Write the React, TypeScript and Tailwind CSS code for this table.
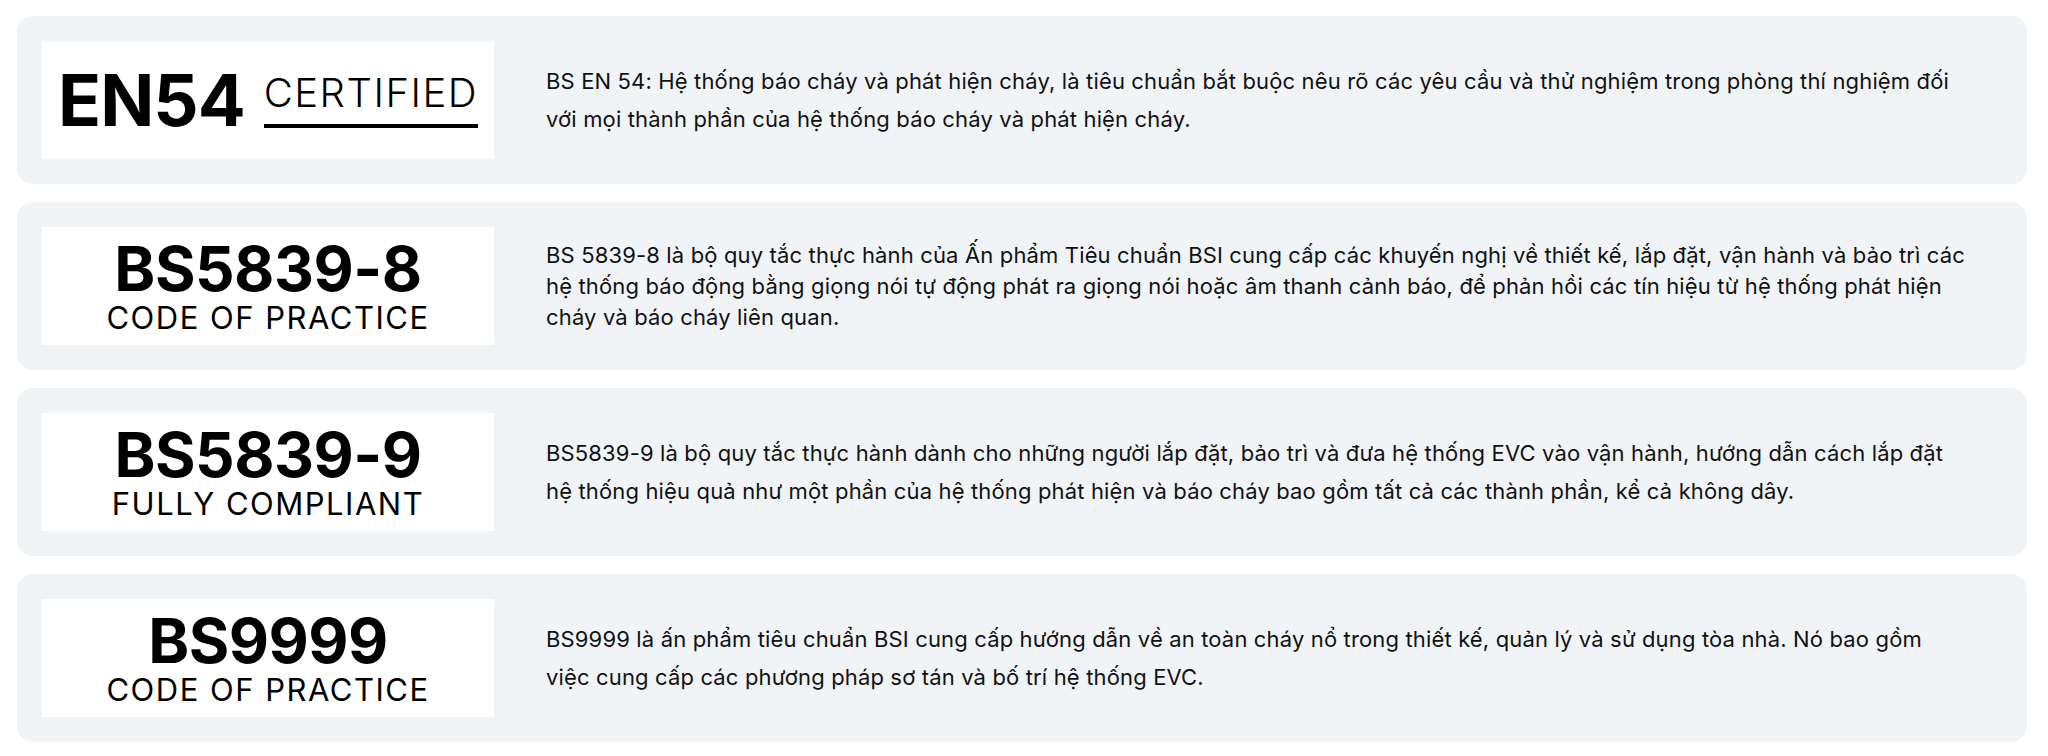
import React from "react";

type Standard = {
    id: string;
    badge: React.ReactNode;
    lines: string[];
    tight?: boolean;
};

const EN54Badge = () => (
    <div className="flex items-center gap-[19px]">
        <span className="text-[71px] font-bold leading-none tracking-[-1px]">EN54</span>
        <span className="flex flex-col items-stretch">
            <span className="text-[40px] font-light leading-none tracking-[1.5px]">CERTIFIED</span>
            <span className="mt-[11px] h-[4px] bg-black" />
        </span>
    </div>
);

const CodeBadge = ({ title, subtitle }: { title: string; subtitle: string }) => (
    <div className="flex flex-col items-center">
        <span className="text-[62px] font-bold leading-[62px] tracking-[-0.5px]">{title}</span>
        <span className="mt-[2px] text-[31px] font-normal leading-[32px] tracking-[1.5px]">{subtitle}</span>
    </div>
);

const standards: Standard[] = [
    {
        id: "en54",
        badge: <EN54Badge />,
        lines: [
            "BS EN 54: Hệ thống báo cháy và phát hiện cháy, là tiêu chuẩn bắt buộc nêu rõ các yêu cầu và thử nghiệm trong phòng thí nghiệm đối",
            "với mọi thành phần của hệ thống báo cháy và phát hiện cháy.",
        ],
    },
    {
        id: "bs5839-8",
        badge: <CodeBadge title="BS5839-8" subtitle="CODE OF PRACTICE" />,
        tight: true,
        lines: [
            "BS 5839-8 là bộ quy tắc thực hành của Ấn phẩm Tiêu chuẩn BSI cung cấp các khuyến nghị về thiết kế, lắp đặt, vận hành và bảo trì các",
            "hệ thống báo động bằng giọng nói tự động phát ra giọng nói hoặc âm thanh cảnh báo, để phản hồi các tín hiệu từ hệ thống phát hiện",
            "cháy và báo cháy liên quan.",
        ],
    },
    {
        id: "bs5839-9",
        badge: <CodeBadge title="BS5839-9" subtitle="FULLY COMPLIANT" />,
        lines: [
            "BS5839-9 là bộ quy tắc thực hành dành cho những người lắp đặt, bảo trì và đưa hệ thống EVC vào vận hành, hướng dẫn cách lắp đặt",
            "hệ thống hiệu quả như một phần của hệ thống phát hiện và báo cháy bao gồm tất cả các thành phần, kể cả không dây.",
        ],
    },
    {
        id: "bs9999",
        badge: <CodeBadge title="BS9999" subtitle="CODE OF PRACTICE" />,
        lines: [
            "BS9999 là ấn phẩm tiêu chuẩn BSI cung cấp hướng dẫn về an toàn cháy nổ trong thiết kế, quản lý và sử dụng tòa nhà. Nó bao gồm",
            "việc cung cấp các phương pháp sơ tán và bố trí hệ thống EVC.",
        ],
    },
];

const App = () => {
    return (
        <div className="min-h-screen bg-white pt-[16px] pl-[17px] pr-[21px] font-['Inter',sans-serif] text-[#111]">
            <div className="flex flex-col gap-[18px]">
                {standards.map(item => (
                    <div
                        key={item.id}
                        className="flex h-[168px] items-center gap-[52px] rounded-[16px] bg-[#f0f4f7] pl-[25px] pr-[40px]"
                    >
                        <div className="flex h-[118px] w-[452px] shrink-0 items-center justify-center bg-white text-black">
                            {item.badge}
                        </div>
                        <div
                            className={
                                item.tight
                                    ? "text-[22px] leading-[31px] tracking-[0.15px]"
                                    : "text-[22px] leading-[38px] tracking-[0.15px]"
                            }
                        >
                            {item.lines.map((line, i) => (
                                <div key={i} className="whitespace-nowrap">{line}</div>
                            ))}
                        </div>
                    </div>
                ))}
            </div>
        </div>
    );
};

export default App;
